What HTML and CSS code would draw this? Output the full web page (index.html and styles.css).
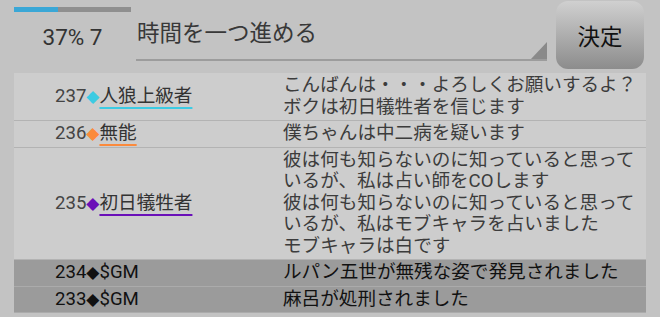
FILE: index.html
```html
<!DOCTYPE html>
<html lang="ja">
<head>
    <meta charset="UTF-8">
    <meta name="viewport" content="width=device-width, initial-scale=1.0">
    <title>人狼 ログ</title>
    <link rel="stylesheet" href="styles.css">
</head>
<body>
    <div class="top-bar">
        <div class="status">
            <div class="progress"><div class="progress-fill" style="width: 37.6%"></div></div>
            <div class="status-text">37% 7</div>
        </div>
        <div class="action-select">
            <span class="action-text">時間を一つ進める</span>
            <span class="select-arrow"></span>
        </div>
        <button class="decide-btn">決定</button>
    </div>

    <div class="log">
        <div class="log-row">
            <div class="who">237<span class="mark mark-cyan">◆</span><span class="name name-cyan">人狼上級者</span></div>
            <div class="msg">こんばんは・・・よろしくお願いするよ？<br>ボクは初日犠牲者を信じます</div>
        </div>
        <div class="log-row">
            <div class="who">236<span class="mark mark-orange">◆</span><span class="name name-orange">無能</span></div>
            <div class="msg">僕ちゃんは中二病を疑います</div>
        </div>
        <div class="log-row">
            <div class="who">235<span class="mark mark-purple">◆</span><span class="name name-purple">初日犠牲者</span></div>
            <div class="msg">彼は何も知らないのに知っていると思っているが、私は占い師をCOします<br>彼は何も知らないのに知っていると思っているが、私はモブキャラを占いました<br>モブキャラは白です</div>
        </div>
        <div class="log-row system">
            <div class="who">234<span class="mark">◆</span>$GM</div>
            <div class="msg">ルパン五世が無残な姿で発見されました</div>
        </div>
        <div class="log-row system">
            <div class="who">233<span class="mark">◆</span>$GM</div>
            <div class="msg">麻呂が処刑されました</div>
        </div>
    </div>
</body>
</html>
```

FILE: styles.css
```css
body {
    margin: 0;
    background: #c3c3c3;
    font-family: Roboto, "Noto Sans CJK JP", sans-serif;
    color: #3a3a3a;
}

.top-bar {
    display: flex;
    align-items: flex-start;
    height: 73px;
    padding-left: 14px;
    box-sizing: border-box;
}

.status {
    width: 117px;
}

.progress {
    margin-top: 7px;
    height: 5px;
    background: #8f8f8f;
}

.progress-fill {
    height: 100%;
    background: #3aa7d6;
}

.status-text {
    margin-top: 11px;
    text-align: center;
    font-size: 22.5px;
    line-height: 28px;
    color: #333;
}

.action-select {
    position: relative;
    width: 411px;
    height: 53px;
    margin-top: 8px;
    margin-left: 5px;
    padding-left: 1px;
    box-sizing: border-box;
    border-bottom: 2px solid #9c9c9c;
}

.action-text {
    display: block;
    margin-top: 11px;
    font-size: 22.5px;
    line-height: 28px;
    color: #383838;
}

.select-arrow {
    position: absolute;
    right: 0;
    bottom: 0;
    width: 0;
    height: 0;
    border-left: 16px solid transparent;
    border-bottom: 17px solid #8a8a8a;
}

.decide-btn {
    width: 88px;
    height: 68px;
    margin-top: 1px;
    margin-left: 9px;
    border: none;
    border-radius: 12px;
    background: linear-gradient(#d0d0d0, #8c8c8c);
    font-family: inherit;
    font-size: 22.5px;
    color: #111;
}

.log {
    width: 632px;
    margin-left: 14px;
}

.log-row {
    display: grid;
    grid-template-columns: 269px 1fr;
    background: #cdcdcd;
    border-bottom: 1px solid #b3b3b3;
    font-size: 18.6px;
    line-height: 21.5px;
}

.who {
    display: flex;
    align-items: center;
    padding-left: 41px;
    color: #444;
}

.msg {
    padding: 2px 8px 2px 0;
    color: #3c3c3c;
}

.mark {
    font-family: "DejaVu Sans", sans-serif;
    font-size: 17px;
}

.mark-cyan { color: #3ccbe3; }
.mark-orange { color: #fb8a3c; }
.mark-purple { color: #6a10b8; }

.name {
    color: #333;
    text-decoration: underline;
    text-decoration-thickness: 2px;
    text-underline-offset: 5px;
}

.name-cyan { text-decoration-color: #3ccbe3; }
.name-orange { text-decoration-color: #fb8a3c; }
.name-purple { text-decoration-color: #6a10b8; }

.system {
    background: #9b9b9b;
    border-bottom-color: #ababab;
}

.system .who,
.system .msg {
    color: #111;
}

.system .mark {
    color: #111;
}
```
